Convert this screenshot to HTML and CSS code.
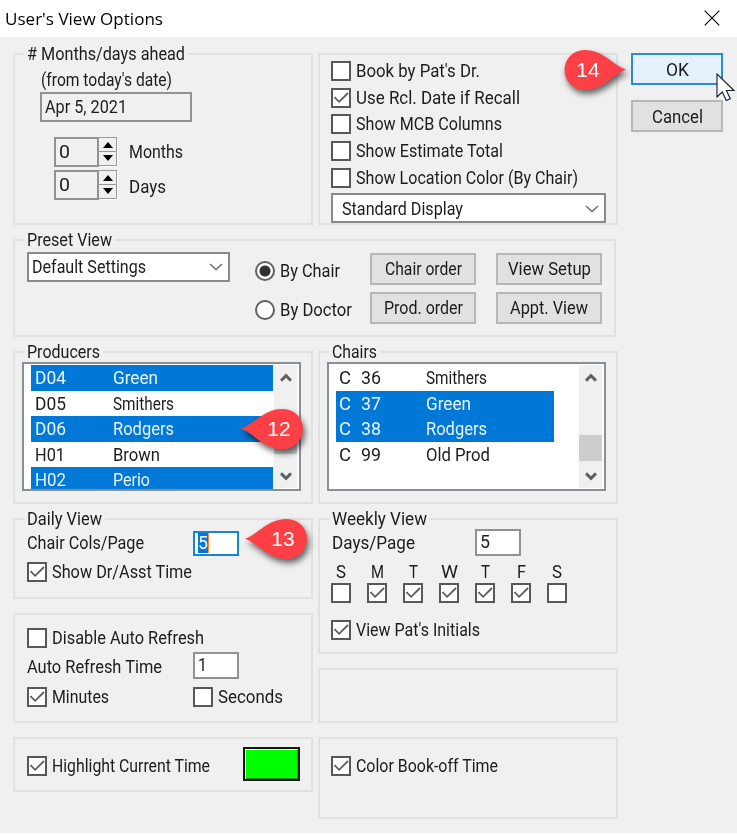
FILE: index.html
```html
<!DOCTYPE html>
<html lang="en">
<head>
<meta charset="utf-8">
<title>User's View Options</title>
<link rel="stylesheet" href="styles.css">
</head>
<body>
<svg class="defs" width="0" height="0" aria-hidden="true">
  <symbol id="check" viewBox="0 0 20 20"><path d="M3.500 9.200l4.600 4.600L17 5" fill="none" stroke="#5c5c5c" stroke-width="1.800"/></symbol>
  <symbol id="down" viewBox="0 0 14 8"><path d="M1 1l6 5.600L13 1" fill="none" stroke="#777" stroke-width="1.700"/></symbol>
  <symbol id="up-bold" viewBox="0 0 12 10"><path d="M1 7.600l5-5 5 5" fill="none" stroke="#606060" stroke-width="3"/></symbol>
  <symbol id="down-bold" viewBox="0 0 12 10"><path d="M1 2.400l5 5 5-5" fill="none" stroke="#606060" stroke-width="3"/></symbol>
</svg>
<div class="window">
  <header class="titlebar">
    <h1><span data-w="158">User's View Options</span></h1>
    <svg class="close" width="16" height="16" viewBox="0 0 16 16"><path d="M.7.7l14.600 14.600M15.300.7L.7 15.300" stroke="#000" stroke-width="1.150"/></svg>
  </header>
  <main class="body">
    <div class="groups">
      <section class="group ahead">
        <h2 class="legend"><span data-w="158"># Months/days ahead</span></h2>
        <p class="from"><span data-w="131">(from today's date)</span></p>
        <div class="date"><span data-w="82">Apr 5, 2021</span></div>
        <div class="spin"><div class="num"><span data-w="11">0</span></div><div class="arrows"><i class="up"></i><i class="dn"></i></div><span class="unit" data-w="54">Months</span></div>
        <div class="spin"><div class="num"><span data-w="11">0</span></div><div class="arrows"><i class="up"></i><i class="dn"></i></div><span class="unit low" data-w="37">Days</span></div>
      </section>
      <section class="group options">
        <label class="row"><b class="box"></b><span data-w="124">Book by Pat's Dr.</span></label>
        <label class="row"><b class="box"><svg><use href="#check"/></svg></b><span data-w="164">Use Rcl. Date if Recall</span></label>
        <label class="row"><b class="box"></b><span data-w="146">Show MCB Columns</span></label>
        <label class="row"><b class="box"></b><span data-w="147">Show Estimate Total</span></label>
        <label class="row"><b class="box"></b><span data-w="222">Show Location Color (By Chair)</span></label>
        <div class="select display"><span data-w="121">Standard Display</span><svg class="chev"><use href="#down"/></svg></div>
      </section>
      <section class="group preset">
        <div class="presetleft">
          <h2 class="legend"><span data-w="85">Preset View</span></h2>
          <div class="select"><span data-w="114">Default Settings</span><svg class="chev"><use href="#down"/></svg></div>
        </div>
        <div class="radios">
          <label><b class="radio on"></b><span data-w="60">By Chair</span></label>
          <label><b class="radio"></b><span data-w="72">By Doctor</span></label>
        </div>
        <div class="buttons">
          <div class="btn"><span data-w="77">Chair order</span></div>
          <div class="btn"><span data-w="83">View Setup</span></div>
          <div class="btn"><span data-w="79">Prod. order</span></div>
          <div class="btn"><span data-w="78">Appt. View</span></div>
        </div>
      </section>
      <section class="group list producers">
        <h2 class="legend"><span data-w="73">Producers</span></h2>
        <div class="listbox">
          <div class="items">
            <div class="item sel"><span data-w="31">D04</span><span data-w="45">Green</span></div>
            <div class="item"><span data-w="31">D05</span><span data-w="61">Smithers</span></div>
            <div class="item sel"><span data-w="31">D06</span><span data-w="61">Rodgers</span></div>
            <div class="item"><span data-w="30">H01</span><span data-w="47">Brown</span></div>
            <div class="item sel"><span data-w="31">H02</span><span data-w="37">Perio</span></div>
          </div>
          <div class="scroll"><svg><use href="#up-bold"/></svg><i class="thumb"></i><svg><use href="#down-bold"/></svg></div>
        </div>
      </section>
      <section class="group list chairs">
        <h2 class="legend"><span data-w="45">Chairs</span></h2>
        <div class="listbox">
          <div class="items">
            <div class="item"><span data-w="12">C</span><span data-w="20">36</span><span data-w="61">Smithers</span></div>
            <div class="item sel"><span data-w="12">C</span><span data-w="20">37</span><span data-w="45">Green</span></div>
            <div class="item sel"><span data-w="12">C</span><span data-w="20">38</span><span data-w="61">Rodgers</span></div>
            <div class="item"><span data-w="12">C</span><span data-w="20">99</span><span data-w="64">Old Prod</span></div>
          </div>
          <div class="scroll"><svg><use href="#up-bold"/></svg><i class="thumb"></i><svg><use href="#down-bold"/></svg></div>
        </div>
      </section>
      <div class="column">
        <section class="group daily">
          <h2 class="legend"><span data-w="75">Daily View</span></h2>
          <div class="field"><span data-w="117">Chair Cols/Page</span><div class="input focus"><span class="picked"><span data-w="10">5</span></span></div></div>
          <label class="row"><b class="box"><svg><use href="#check"/></svg></b><span data-w="140">Show Dr/Asst Time</span></label>
        </section>
        <section class="group refresh">
          <label class="row"><b class="box"></b><span data-w="152">Disable Auto Refresh</span></label>
          <div class="field"><span data-w="135">Auto Refresh Time</span><div class="input"><span data-w="9">1</span></div></div>
          <div class="units">
            <label class="row"><b class="box"><svg><use href="#check"/></svg></b><span data-w="57">Minutes</span></label>
            <label class="row"><b class="box"></b><span data-w="65">Seconds</span></label>
          </div>
        </section>
        <section class="group highlight">
          <label class="row"><b class="box"><svg><use href="#check"/></svg></b><span data-w="158">Highlight Current Time</span></label>
          <div class="swatch"></div>
        </section>
      </div>
      <div class="column">
        <section class="group weekly">
          <h2 class="legend"><span data-w="95">Weekly View</span></h2>
          <div class="field"><span data-w="83">Days/Page</span><div class="input"><span data-w="10">5</span></div></div>
          <div class="days">
            <label><span data-w="10">S</span><b class="box"></b></label>
            <label><span data-w="13">M</span><b class="box"><svg><use href="#check"/></svg></b></label>
            <label><span data-w="9">T</span><b class="box"><svg><use href="#check"/></svg></b></label>
            <label><span data-w="17">W</span><b class="box"><svg><use href="#check"/></svg></b></label>
            <label><span data-w="9">T</span><b class="box"><svg><use href="#check"/></svg></b></label>
            <label><span data-w="9">F</span><b class="box"><svg><use href="#check"/></svg></b></label>
            <label><span data-w="10">S</span><b class="box"></b></label>
          </div>
          <label class="row"><b class="box"><svg><use href="#check"/></svg></b><span data-w="124">View Pat's Initials</span></label>
        </section>
        <section class="group blank"></section>
        <section class="group bookoff">
          <label class="row"><b class="box"><svg><use href="#check"/></svg></b><span data-w="142">Color Book-off Time</span></label>
        </section>
      </div>
    </div>
    <aside class="actions">
      <div class="btn ok"><span data-w="23">OK</span></div>
      <div class="btn"><span data-w="51">Cancel</span></div>
    </aside>
  </main>
  <svg class="pin pin14" viewBox="0 0 72 56"><path d="M66 24.500C52 20 44 5 24.500 5a20 20 0 0 0 0 40C44 45 52 30 66 24.500z"/><text x="28" y="31.500">14</text></svg>
  <svg class="pin pin12" viewBox="0 0 72 56"><path d="M4 24.500C18 20 26 5 46 5a20 20 0 0 1 0 40C26 45 18 30 4 24.500z"/><text x="42" y="31.500">12</text></svg>
  <svg class="pin pin13" viewBox="0 0 72 56"><path d="M4 24.500C18 20 26 5 46 5a20 20 0 0 1 0 40C26 45 18 30 4 24.500z"/><text x="42" y="31.500">13</text></svg>
  <svg class="cursor" width="20" height="30" viewBox="0 0 20 30"><path d="M1 1v23l5.300-5 4 8.500 4-1.800-3.900-8.200h7.600z" fill="#fff" stroke="#111b33" stroke-width="1.100"/></svg>
</div>
<script src="fit.js"></script>
</body>
</html>
```
FILE: styles.css
```css
* { box-sizing: border-box; }
body { margin: 0; background: #fff; font: 17.5px/20px Roboto, "Liberation Sans", sans-serif; color: #1c1c1c; }
h1, h2, p { margin: 0; font: inherit; }
b, i { display: block; }
[data-w] { display: inline-block; white-space: nowrap; transform-origin: 0 50%; flex: none; }
.defs { position: absolute; }
.window { position: relative; width: 737px; height: 834px; overflow: hidden; }
.titlebar { display: flex; justify-content: space-between; align-items: flex-start; height: 37px; padding: 9px 17px 0 5px; }
.titlebar h1 { font: 17px/20px "Open Sans", "Noto Sans", sans-serif; color: #000; }
.close { display: block; margin-top: 1px; }
.body { display: flex; gap: 13px; height: 796px; padding: 16px 13px 0 13px; background: #f0f0f0; }
.groups { display: grid; grid-template-columns: 300px 300px; grid-template-rows: 172px 98px 153px 301px; column-gap: 5px; row-gap: 14px; align-content: start; }
.group { border: 2px solid #e1e1e1; }
.legend { width: max-content; height: 20px; padding: 0 3px; margin: -11px 0 0 9px; background: #f0f0f0; }

.from { margin: 6px 0 0 26px; }
.date { width: 152px; height: 30px; margin: 2px 0 15px 25px; padding: 3px 0 0 3px; border: 2px solid #929292; }
.spin { display: flex; margin: 0 0 3px 39px; height: 30px; }
.num { width: 45px; height: 30px; padding: 3px 0 0 3px; border: 2px solid #929292; }
.arrows { width: 18px; height: 29px; border: 1px solid #999; border-left: 0; box-shadow: 1px 1px #fff; display: grid; justify-items: center; align-items: center; background: linear-gradient(#999, #999) 0 50% / 100% 1px no-repeat; }
.up, .dn { border: 5.5px solid transparent; width: 0; height: 0; }
.up { border-top: 0; border-bottom: 6px solid #000; }
.dn { border-bottom: 0; border-top: 6px solid #000; }
.unit { margin: 5px 0 0 12px; }
.unit.low { margin-top: 7px; }

.row { display: flex; align-items: center; gap: 5px; height: 20px; }
.box { width: 20px; height: 20px; flex: none; border: 2px solid #585858; background: #fff; }
.box svg { display: block; width: 20px; height: 20px; margin: -2px; }
.options { padding: 6px 0 0 11px; }
.options .row { margin-bottom: 7px; }
.options .row:nth-child(2) { margin-bottom: 6px; }
.select { display: flex; align-items: center; justify-content: space-between; width: 203px; height: 30px; padding: 0 7px 0 3px; border: 2px solid #8a8a8a; background: #fff; }
.display { width: 275px; padding: 2px 5px 0 9px; margin-top: -2px; }
.chev { width: 14px; height: 8px; display: block; }

.preset { grid-column: 1 / 3; width: 603px; display: flex; }
.preset .select { margin: 2px 0 0 12px; padding-right: 5px; }
.presetleft { width: 240px; }
.radios { width: 115px; padding-top: 20px; }
.radios label { display: flex; gap: 5px; height: 20px; margin-bottom: 19px; }
.radio { width: 20px; height: 20px; border: 2px solid #606060; border-radius: 50%; background: #fff; flex: none; }
.radio.on { background: radial-gradient(circle, #303030 5px, #fff 6px); }
.buttons { display: grid; grid-template-columns: 106px 106px; grid-template-rows: 32px 32px; column-gap: 20px; row-gap: 7px; padding-top: 12px; }
.btn { display: flex; align-items: center; justify-content: center; height: 32px; border: 2px solid #b7b7b7; background: #e1e1e1; }

.listbox { display: flex; justify-content: space-between; width: 279px; height: 129px; margin: 0 0 0 7px; padding: 1px 2px; border: 2px solid #8a8e96; background: #fff; overflow: hidden; }
.items { width: 242px; margin-left: 5px; }
.item { display: grid; grid-template-columns: 78px auto; justify-content: start; justify-items: start; height: 25.5px; padding: 3px 0 0 4px; }
.sel { background: #0078d7; color: #e9f4fd; }
.scroll { width: 23px; background: #f0f0f0; display: flex; flex-direction: column; align-items: center; justify-content: space-between; padding: 8px 0 7px; }
.scroll svg { display: block; width: 12px; height: 10px; }
.thumb { width: 23px; height: 26px; background: #cdcdcd; }
.producers .scroll .thumb { margin: 28px 0 0; }
.chairs .thumb { margin-top: 42px; }
.chairs .items { width: 218px; }
.chairs .item { grid-template-columns: 22px 65px auto; padding-left: 3px; }

.column { display: flex; flex-direction: column; gap: 14px; }
.daily { height: 81px; }
.field { display: flex; height: 27px; }
.field > span { margin: 4px 0 0 12px; }
.input { width: 46px; height: 27px; margin: 0 72px 0 auto; padding: 1px 0 0 3px; border: 2px solid #929292; background: #fff; }
.input.focus { height: 25px; margin-top: 2px; padding: 0 0 0 3px; border-color: #1a82d8; }
.picked { display: block; width: 11px; height: 20px; background: #0078d7; color: #fff; border-right: 1.5px solid #ff8728; }
.daily .row { margin: 6px 0 0 12px; }
.refresh { height: 110px; padding-top: 13px; }
.refresh > .row { margin-left: 12px; }
.refresh .field { margin-top: 4px; }
.refresh .field > span { margin-top: 5px; }
.units { display: flex; padding: 8px 0 0 12px; }
.units .row { width: 166px; flex: none; }
.units .row:last-child { width: 100px; }
.highlight { height: 55px; padding: 8px 11px 0 12px; display: flex; justify-content: space-between; }
.highlight .row { margin-top: 9px; }
.swatch { width: 57px; height: 34px; border: 2px solid #181818; background: #0f0; box-shadow: inset 1px 1px #fff, inset -1px -1px #2d8a2d; }
.weekly { height: 137px; }
.weekly .input { margin-right: 95px; }
.days { display: flex; gap: 16px; margin: 6px 0 0 11px; }
.days label { width: 20px; height: 41px; display: flex; flex-direction: column; align-items: center; gap: 1px; }
.weekly > .row { margin: 17px 0 0 11px; }
.weekly > .row, .options .row, .bookoff .row { gap: 5px; }
.blank { height: 55px; }
.bookoff { height: 82px; padding: 17px 0 0 11px; }

.actions { width: 92px; display: grid; grid-template-rows: 32px 32px; row-gap: 15px; align-content: start; }
.actions .btn { padding-top: 1px; }
.ok { border-color: #2a8bdc; background: #e5f1fb; }
.pin { position: absolute; width: 72px; height: 56px; overflow: visible; filter: drop-shadow(2px 4px 3px rgba(0,0,0,.6)); }
.pin path { fill: #fc4045; }
.pin text { fill: #fff; font: 21px "Liberation Sans", sans-serif; text-anchor: middle; }
.pin14 { left: 560px; top: 44.5px; }
.pin12 { left: 237px; top: 404px; }
.pin13 { left: 241px; top: 514px; }
.cursor { position: absolute; left: 716px; top: 73px; }
```
FILE: fit.js
```js
document.querySelectorAll('[data-w]').forEach(function (el) {
  var natural = el.getBoundingClientRect().width;
  var w = Number(el.dataset.w);
  el.style.transform = 'scaleX(' + w / natural + ')';
  el.style.marginRight = (w - natural) + 'px';
});
```
